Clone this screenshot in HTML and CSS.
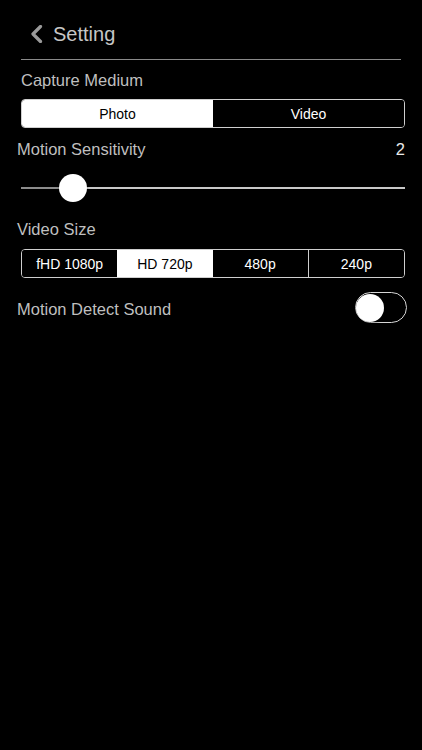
FILE: index.html
```html
<!DOCTYPE html>
<html>
<head>
<meta charset="utf-8">
<link rel="stylesheet" href="styles.css">
</head>
<body>
<div class="screen">
  <div class="header">
    <svg class="back" width="13" height="18" viewBox="0 0 13 18"><path d="M10.5 1.5 L3 9 L10.5 16.5" fill="none" stroke="#9a9a9a" stroke-width="3.2" stroke-linecap="round" stroke-linejoin="round"/></svg>
    <span class="title">Setting</span>
  </div>
  <div class="divider"></div>

  <div class="label label-capture">Capture Medium</div>
  <div class="seg seg-capture">
    <div class="seg-item active">Photo</div>
    <div class="seg-item">Video</div>
  </div>

  <div class="row row-sens">
    <span class="label">Motion Sensitivity</span>
    <span class="value">2</span>
  </div>
  <div class="slider">
    <div class="track-min"></div>
    <div class="track-max"></div>
    <div class="thumb"></div>
  </div>

  <div class="row row-size">
    <span class="label">Video Size</span>
  </div>
  <div class="seg seg-size">
    <div class="seg-item">fHD 1080p</div>
    <div class="seg-item active">HD 720p</div>
    <div class="seg-item">480p</div>
    <div class="seg-item">240p</div>
  </div>

  <div class="row row-sound">
    <span class="label">Motion Detect Sound</span>
    <div class="toggle"><div class="knob"></div></div>
  </div>
</div>
</body>
</html>
```

FILE: styles.css
```css
html, body {
  margin: 0;
  padding: 0;
  background: #000;
}
.screen {
  width: 422px;
  height: 750px;
  background: #000;
  font-family: "Liberation Sans", Arial, sans-serif;
  color: #c2c2c2;
  overflow: hidden;
}
.header {
  display: flex;
  align-items: center;
  padding: 22px 0 0 30px;
  height: 24px;
}
.back {
  display: block;
  width: 13px;
  height: 18px;
}
.title {
  margin-left: 10px;
  font-size: 20px;
  line-height: 24px;
  color: #c6c6c6;
}
.divider {
  margin: 13px 21px 0 21px;
  height: 1px;
  background: #8a8a8a;
}
.label {
  font-size: 16.5px;
  line-height: 20px;
  color: #bfbfbf;
}
.label-capture {
  margin: 10px 0 0 21px;
}
.seg {
  display: flex;
  margin: 9px 17px 0 21px;
  height: 29px;
  box-sizing: border-box;
  border: 1px solid #cfcfcf;
  border-radius: 4px;
  overflow: hidden;
}
.seg-item {
  flex: 1;
  display: flex;
  align-items: center;
  justify-content: center;
  font-size: 14px;
  color: #fff;
  background: #000;
}
.seg-item.active {
  background: #fff;
  color: #000;
}
.seg-size .seg-item + .seg-item {
  border-left: 1px solid #cfcfcf;
}
.seg-size .seg-item.active,
.seg-size .seg-item.active + .seg-item {
  border-left: none;
}
.row {
  display: flex;
  align-items: center;
  justify-content: space-between;
  padding: 0 17px 0 17px;
}
.row-sens {
  margin-top: 11px;
  height: 20px;
}
.value {
  font-size: 16.5px;
  line-height: 20px;
  color: #eaeaea;
}
.slider {
  position: relative;
  margin: 15px 17px 0 21px;
  height: 28px;
  display: flex;
  align-items: center;
}
.track-min {
  width: 52px;
  height: 2px;
  background: #8c8c8c;
}
.track-max {
  flex: 1;
  height: 2px;
  background: #c8c8c8;
}
.thumb {
  position: absolute;
  left: 38px;
  top: 0;
  width: 28px;
  height: 28px;
  border-radius: 50%;
  background: #fff;
  box-shadow: 0 1px 3px rgba(0,0,0,0.4);
}
.row-size {
  margin-top: 17px;
  height: 20px;
}
.seg-size {
  margin-top: 10px;
}
.row-sound {
  margin-top: 14px;
  height: 31px;
  padding-right: 15px;
}
.row-sound .label {
  position: relative;
  top: 1px;
}
.toggle {
  width: 52px;
  height: 31px;
  box-sizing: border-box;
  border: 1.5px solid #d6d6d6;
  border-radius: 16px;
  background: #000;
  display: flex;
  align-items: center;
  padding-left: 0;
}
.knob {
  width: 28px;
  height: 28px;
  border-radius: 50%;
  background: #fff;
  box-shadow: 0 2px 3px rgba(0,0,0,0.3);
}
```
